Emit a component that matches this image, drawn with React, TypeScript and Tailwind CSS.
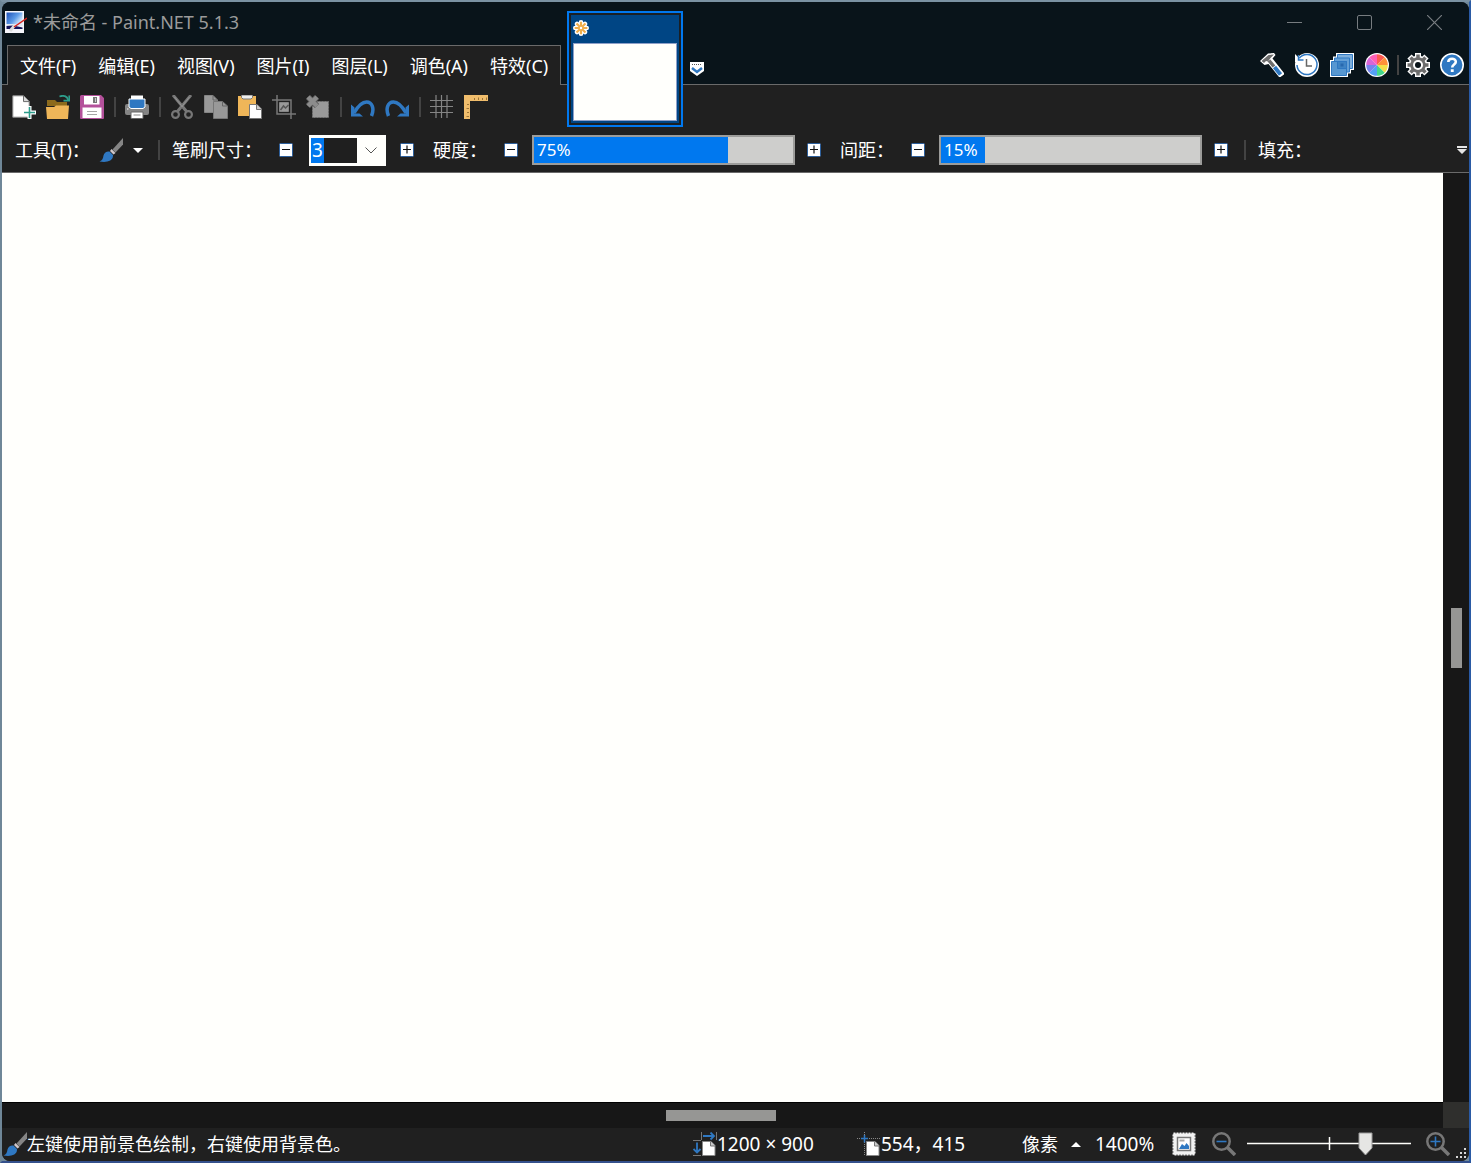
import { useState } from 'react';
import type { ReactNode } from 'react';

const menus = ['文件(F)', '编辑(E)', '视图(V)', '图片(I)', '图层(L)', '调色(A)', '特效(C)'];

function Icon({ children, className = 'size-6' }: { children: ReactNode; className?: string }) {
  return (
    <svg viewBox="0 0 24 24" fill="none" className={`shrink-0 ${className}`} aria-hidden="true">
      {children}
    </svg>
  );
}

const NewIcon = () => (
  <Icon>
    <path d="M.8.8h10.7l5.7 5.7v15.7H.8z" fill="#fff" stroke="#8a8a8a" />
    <path d="M11.5 1v5.6H17" fill="#d8d8d8" stroke="#6d6d6d" />
    <path d="M17.500 11v13M11 17.500h13" stroke="#fff" strokeWidth="4" />
    <path d="M17.500 12v11M12 17.500h11" stroke="#2d9d8b" strokeWidth="1.600" />
  </Icon>
);

const OpenIcon = () => (
  <Icon>
    <path d="M1 11V5h8l2 2h10v4z" fill="#8c6a1c" />
    <path d="M0 12h8l2-1.500h13L22 24H1z" fill="#efb659" />
    <path d="M13.500 1.500c4-1.500 7.500-.5 8.800 3.500" stroke="#2d9d8b" strokeWidth="1.800" />
    <path d="M23.300.5v5.200H17.500" stroke="#2d9d8b" strokeWidth="1.800" />
  </Icon>
);

const SaveIcon = () => (
  <Icon>
    <path d="M0 1.500A1.500 1.500 0 0 1 1.500 0H21l3 3v20a1 1 0 0 1-1 1H1a1 1 0 0 1-1-1z" fill="#b4519b" />
    <path d="M4 1h15.500v8.500H4zM2.500 12.500h19V23h-19z" fill="#fff" />
    <path d="M13 2h4v6h-4z" fill="#777" />
    <path d="M15 3h1v4h-1z" fill="#ccc" />
    <path d="M7 16.500h10M7 19.500h10" stroke="#a5a5a5" />
  </Icon>
);

const PrintIcon = () => (
  <Icon>
    <rect x="0" y="9" width="24" height="11" rx="2" fill="#858585" />
    <path d="M6 .5h12V7H6z" fill="#fff" />
    <path d="M4 4h16v8l-2 1.500H6L4 12z" fill="#2f78c2" stroke="#fff" />
    <path d="M6 17h12v6.500H6z" fill="#fff" stroke="#666" />
    <path d="M8.500 20h7" stroke="#888" />
    <path d="M2 14h1.500" stroke="#fff" />
  </Icon>
);

const CutIcon = () => (
  <Icon>
    <path d="M3 0 17 17M21 0 7 17" stroke="#777" strokeWidth="3" />
    <path d="m4.500 2 8 10M19.500 2l-8 10" stroke="#999" strokeWidth="0.800" />
    <circle cx="5.500" cy="19.500" r="3.400" stroke="#777" strokeWidth="2.200" />
    <circle cx="18.500" cy="19.500" r="3.400" stroke="#777" strokeWidth="2.200" />
  </Icon>
);

const CopyIcon = () => (
  <Icon>
    <path d="M.5.5H9l4.500 4.500v12.500H.5z" fill="#999" stroke="#858585" />
    <path d="M9 .5V5h4.500" stroke="#666" />
    <path d="M9.500 6.500h9L23.500 11v12.500h-14z" fill="#999" stroke="#777" />
    <path d="M18.500 6.500V11h5" stroke="#666" />
  </Icon>
);

const PasteIcon = () => (
  <Icon>
    <path d="M0 1h18v20H0z" fill="#efb659" />
    <path d="M3.500 0h11v2.500L13 4H5L3.500 2.500z" fill="#eee" stroke="#777" />
    <path d="M11.500 9.500H19l4.500 4.500v9.500h-12z" fill="#fff" stroke="#777" />
    <path d="M18.500 9.500V14.500h5" fill="#ccc" stroke="#777" />
  </Icon>
);

const CropIcon = () => (
  <Icon>
    <path d="M0 5h19v19M5 0v19h19" stroke="#777" strokeWidth="1.500" />
    <path d="M7.500 7.500h9v9h-9z" fill="#999" stroke="#858585" />
    <path d="m8.500 15 3-4 2 2 3-3" stroke="#555" strokeWidth="1.500" />
  </Icon>
);

const DeselectIcon = () => (
  <Icon>
    <path d="M6.500 6.500h16v16h-16z" fill="#999" stroke="#777" strokeDasharray="2 1" />
    <path d="m2 2 9 9M11 2l-9 9" stroke="#555" strokeWidth="6" />
    <path d="m2 2 9 9M11 2l-9 9" stroke="#8c8c8c" strokeWidth="4.500" />
  </Icon>
);

const UndoIcon = ({ flip = false }: { flip?: boolean }) => (
  <Icon className={flip ? 'size-6 -scale-x-100' : 'size-6'}>
    <path d="M3 18C7 11 11 7 15.500 7c6 0 8 7 5 14" stroke="#2f78c2" strokeWidth="3.500" />
    <path d="M0 9.500v12h12l-3.500-3H3.500v-6z" fill="#2f78c2" />
  </Icon>
);

const GridIcon = () => (
  <Icon>
    <path d="M6 0v23M11.500 0v23M17 0v23M0 5.500h23M0 11.500h23M0 17.500h23" stroke="#858585" strokeWidth="1.200" />
  </Icon>
);

const RulerIcon = () => (
  <Icon>
    <path d="M0 0h24v6H6v18H0z" fill="#f0bd6c" />
    <path d="M10.500 5V3M14.500 5V2.500M18.500 5V3M22.500 5V2.500M5 9.500H3M5 13.500H2.500M5 17.500H3M5 21.500H2.500" stroke="#9b7436" />
  </Icon>
);

const BrushIcon = () => (
  <Icon>
    <path d="M24 0v6.500l-7.500 8-3-3z" fill="#858585" />
    <path d="m12.500 11 4 4-2 1.500-3.500-3.500z" fill="#d0c8cc" />
    <path d="M10.500 13.500 14 17c.5 7-7.500 7.500-13.500 6.500 3-1 3.500-3 4-6 1-3.500 3.500-4.500 6-4z" fill="#2f78c2" />
  </Icon>
);

const HammerIcon = () => (
  <Icon>
    <path d="M0 8 8 .500 14 0l1.500 2L12.500 5.500 24 20v1.500L20.500 24h-1.500L8.500 11 4.500 12z" fill="#fff" />
    <path d="M1.500 8 8.500 2 14 1.500 10.500 5l-2.500 3.500-2-.5L4 10z" fill="#6d6d6d" />
    <path d="m9 7.500 5 6" stroke="#6d6d6d" strokeWidth="3.500" />
    <path d="m14.500 14 6 7.500" stroke="#2f78c2" strokeWidth="4" />
  </Icon>
);

const HistoryIcon = () => (
  <Icon>
    <circle cx="12" cy="12" r="12" fill="#fff" />
    <path d="M4 5.500A10 10 0 1 1 2 12" stroke="#2f78c2" strokeWidth="1.500" />
    <path d="M0 1v8h8z" fill="#fff" />
    <path d="M3.500 2v5h5" stroke="#2f78c2" strokeWidth="1.500" />
    <path d="M11.500 6v7H17" stroke="#666" strokeWidth="1.500" />
  </Icon>
);

const LayersIcon = () => (
  <Icon>
    <path d="M0 7h3V3.500h3V0h18v17h-3v3.500h-3V24H0z" fill="#fff" />
    <path d="M7.500 1.500h15v14h-15z" fill="#7eafdc" stroke="#2f78c2" />
    <path d="M4.500 5h15v14h-15z" fill="#65a0d6" stroke="#2f78c2" />
    <path d="M1.500 8.500h15v14h-15z" fill="#5797d1" stroke="#2f78c2" />
    <path d="M7.500 8.500h9v7h-9z" fill="#3e83c4" stroke="#2f78c2" />
    <path d="M10.500 10.500h3v3h-3z" fill="#2768ae" />
  </Icon>
);

const wheel = ['#ff5a50', '#ff9138', '#f4df4a', '#44d98a', '#55a0f5', '#7583ee', '#d865d8', '#ff5fb5'];

const ColorsIcon = () => (
  <Icon>
    <circle cx="12" cy="12" r="12" fill="#fff" />
    {wheel.map((color, i) => (
      <path key={color} d="M12 12V1.200a10.800 10.800 0 0 1 7.640 3.160z" fill={color} transform={`rotate(${i * 45} 12 12)`} />
    ))}
  </Icon>
);

const GearIcon = () => (
  <Icon>
    <path d="M12 0v24M0 12h24M3.500 3.500l17 17M20.500 3.500l-17 17" stroke="#fff" strokeWidth="6" />
    <circle cx="12" cy="12" r="9.500" fill="#fff" />
    <path d="M12 1.500v21M1.500 12h21M4.500 4.500l15 15M19.500 4.500l-15 15" stroke="#6d6d6d" strokeWidth="3.500" />
    <circle cx="12" cy="12" r="7.800" fill="#6d6d6d" />
    <circle cx="12" cy="12" r="5" fill="#fff" />
    <circle cx="12" cy="12" r="3" fill="#09141a" />
  </Icon>
);

const HelpIcon = () => (
  <Icon>
    <circle cx="12" cy="12" r="11.200" fill="#2f78c2" stroke="#fff" strokeWidth="1.600" />
    <path d="M8.300 9c.2-4.200 7.500-4.200 7.500-.2 0 2.700-3.600 2.700-3.600 5.700" stroke="#fff" strokeWidth="2.600" />
    <path d="M10.800 16.200h2.900V19h-2.900z" fill="#fff" />
  </Icon>
);

const petals = [0, 45, 90, 135, 180, 225, 270, 315];

const FlowerIcon = () => (
  <Icon className="size-4">
    <circle cx="12" cy="12" r="9" fill="#fff" />
    {petals.map((a) => (
      <circle key={a} cx="12" cy="3.500" r="3.500" fill="#fff" transform={`rotate(${a} 12 12)`} />
    ))}
    {petals.map((a) => (
      <path key={a} d="M12 9V2.500" stroke="#f0ae4c" strokeWidth="3.200" transform={`rotate(${a} 12 12)`} />
    ))}
    <circle cx="12" cy="12" r="2.800" fill="#fff" stroke="#f0ae4c" strokeWidth="2" />
  </Icon>
);

const LogoIcon = () => (
  <svg viewBox="0 0 22 24" className="h-6 w-[22px] shrink-0" aria-hidden="true">
    <defs>
      <linearGradient id="sky" x1="0" y1="0" x2="1" y2="0.6">
        <stop offset="0" stopColor="#1d50b8" />
        <stop offset="0.6" stopColor="#5b9ae6" />
        <stop offset="1" stopColor="#d5e8fb" />
      </linearGradient>
    </defs>
    <path d="M0 1h19v22H0z" fill="#f5f5fa" />
    <path d="M1.500 2.500h16V14h-16z" fill="url(#sky)" />
    <path d="M1.500 14h16v2l-5 1h-11z" fill="#dfe8f5" />
    <path d="M1.500 16 8 15.500l9.500 2V19h-16z" fill="#14145a" />
    <path d="m5 21 5-6" stroke="#ddd" strokeWidth="3" />
    <path d="m9 17 13-9" stroke="#d8231c" strokeWidth="1.500" />
  </svg>
);

const SizeIcon = () => (
  <Icon>
    <path d="M8.500 0v8M23.500 0v8M0 8.500h8M0 23.500h8" stroke="#777" />
    <path d="M10 4h11M17.500 0.500 21 4l-3.500 3.500M4 10.500v10M.5 17 4 20.500 7.500 17" stroke="#2f78c2" strokeWidth="1.800" />
    <path d="M9.500 9.500H18l4 4v10H9.500z" fill="#fff" stroke="#888" />
    <path d="M17.500 9.500V14H22" fill="#ccc" stroke="#777" />
  </Icon>
);

const CursorIcon = () => (
  <Icon>
    <path d="M7.500 0v24M0 6.500h24" stroke="#888" strokeDasharray="1 1" />
    <path d="M7.500 3v7.500M4 6.500h7" stroke="#2f78c2" strokeWidth="1.500" />
    <path d="M9.500 9.500H18l4 4v10H9.500z" fill="#fff" stroke="#888" />
    <path d="M17.500 9.500V14H22" fill="#ccc" stroke="#777" />
  </Icon>
);

const FitIcon = () => (
  <Icon>
    <path d="M1.500 1.500h21v21h-21z" fill="#f2f2f2" stroke="#f2f2f2" strokeWidth="2" strokeDasharray="2 1" />
    <path d="M5.500 5.500h13v13h-13z" fill="#fff" stroke="#777" strokeWidth="1.500" />
    <path d="m7 17 3-5 2.500 2 2-3 2.500 3v3z" fill="#2f78c2" />
    <path d="M7.500 8.500h5" stroke="#aaa" strokeWidth="2" />
  </Icon>
);

const MagnifyIcon = ({ plus = false }: { plus?: boolean }) => (
  <Icon>
    <circle cx="9.500" cy="9.500" r="8.200" stroke="#777" strokeWidth="2.500" />
    <path d="m15 15 8 8" stroke="#777" strokeWidth="3.500" />
    <path d={plus ? 'M4.500 9.500h10M9.500 4.500v10' : 'M4.500 9.500h10'} stroke="#2f78c2" strokeWidth="1.600" />
  </Icon>
);

function Separator({ className = 'ml-[5px] mr-1' }: { className?: string }) {
  return <span className={`h-5 w-[2px] shrink-0 bg-[#434343] ${className}`} />;
}

function ToolButton({ label, disabled, children }: { label: string; disabled?: boolean; children: ReactNode }) {
  return (
    <button type="button" aria-label={label} disabled={disabled} className="shrink-0 px-[5px]">
      {children}
    </button>
  );
}

function StepButton({ label, plus = false }: { label: string; plus?: boolean }) {
  return (
    <button type="button" aria-label={label} className="shrink-0">
      <svg viewBox="0 0 14 14" className="size-[14px]" aria-hidden="true">
        <rect x="0.5" y="0.5" width="13" height="13" rx="1" fill="#fff" stroke="#2c5f9c" />
        <path d={plus ? 'M3 6.500h8M7 2.500v8' : 'M3 6.500h8'} stroke="#111" strokeWidth="1.200" />
      </svg>
    </button>
  );
}

function PercentBar({ label, initial }: { label: string; initial: number }) {
  const [value, setValue] = useState(initial);

  return (
    <div className="relative h-[30px] w-[263px] shrink-0 border-2 border-[#9c9c9a] bg-[#cececc]">
      {/* The fill never gets narrower than its own text */}
      <div
        className="flex h-full min-w-fit items-center bg-[#0078ef] pl-[3px] pr-[7px] text-[17px] text-white"
        style={{ width: `${value}%` }}
      >
        {value}%
      </div>
      <input
        type="range"
        aria-label={label}
        value={value}
        onChange={(e) => setValue(Number(e.target.value))}
        className="absolute inset-0 size-full opacity-0"
      />
    </div>
  );
}

function TitleBar() {
  return (
    <div className="flex h-[43px] items-start bg-[#09141a]">
      <div className="flex h-10 flex-1 items-center gap-[6px] pl-[3px]">
        <LogoIcon />
        <h1 className="text-lg text-[#9b9b9b]">*未命名 - Paint.NET 5.1.3</h1>
      </div>
      <div className="flex h-10 text-[#777c80]">
        <button type="button" aria-label="最小化" className="flex w-[70px] items-center justify-center">
          <span className="h-px w-[15px] bg-current" />
        </button>
        <button type="button" aria-label="最大化" className="flex w-[70px] items-center justify-center">
          <span className="size-[15px] rounded-[2px] border border-current" />
        </button>
        <button type="button" aria-label="关闭" className="flex w-[70px] items-center justify-center">
          <svg viewBox="0 0 15 15" className="size-[15px]" stroke="currentColor" strokeWidth="1.200" aria-hidden="true">
            <path d="m0 0 15 15M15 0 0 15" />
          </svg>
        </button>
      </div>
    </div>
  );
}

function MenuRow() {
  return (
    <div className="flex h-10 bg-[#09141a]">
      <div className="w-[5px] border-b border-[#6a6a6a]" />
      <nav className="flex shrink-0 items-center gap-[22px] border-x border-t border-[#6a6a6a] bg-[#202020] px-3">
        {menus.map((name) => (
          <button key={name} type="button" className="whitespace-nowrap">
            {name}
          </button>
        ))}
      </nav>
      <div className="flex flex-1 items-center justify-end border-b border-[#6a6a6a] pr-[5px]">
        <div className="flex items-center gap-[11px]">
          <button type="button" aria-label="工具窗口">
            <HammerIcon />
          </button>
          <button type="button" aria-label="历史记录">
            <HistoryIcon />
          </button>
          <button type="button" aria-label="图层窗口">
            <LayersIcon />
          </button>
          <button type="button" aria-label="颜色窗口">
            <ColorsIcon />
          </button>
        </div>
        <Separator className="ml-2 mr-[7px]" />
        <div className="flex items-center gap-[10px]">
          <button type="button" aria-label="设置">
            <GearIcon />
          </button>
          <button type="button" aria-label="帮助">
            <HelpIcon />
          </button>
        </div>
      </div>
    </div>
  );
}

function ToolBar() {
  return (
    <div className="flex h-11 items-center pl-[5px]">
      <ToolButton label="新建"><NewIcon /></ToolButton>
      <ToolButton label="打开"><OpenIcon /></ToolButton>
      <ToolButton label="保存"><SaveIcon /></ToolButton>
      <Separator />
      <ToolButton label="打印"><PrintIcon /></ToolButton>
      <Separator />
      <ToolButton label="剪切" disabled><CutIcon /></ToolButton>
      <ToolButton label="复制" disabled><CopyIcon /></ToolButton>
      <ToolButton label="粘贴"><PasteIcon /></ToolButton>
      <ToolButton label="裁剪" disabled><CropIcon /></ToolButton>
      <ToolButton label="取消选择" disabled><DeselectIcon /></ToolButton>
      <Separator />
      <ToolButton label="撤销"><UndoIcon /></ToolButton>
      <ToolButton label="重做"><UndoIcon flip /></ToolButton>
      <Separator />
      <ToolButton label="网格"><GridIcon /></ToolButton>
      <ToolButton label="标尺"><RulerIcon /></ToolButton>
    </div>
  );
}

function ToolOptions() {
  return (
    <div className="flex h-11 items-center whitespace-nowrap border-b border-[#6a6a6a] pb-px pl-[13px]">
      <span className="w-[84px] shrink-0">工具(T)：</span>
      <button type="button" aria-label="画笔" className="flex shrink-0 items-center gap-[10px]">
        <BrushIcon />
        <svg viewBox="0 0 10 5" className="h-[5px] w-[10px]" fill="#fff" aria-hidden="true">
          <path d="M0 0h10L5 5z" />
        </svg>
      </button>
      <Separator className="ml-[15px] mr-3" />
      <label htmlFor="brush-size" className="w-[107px] shrink-0">笔刷尺寸：</label>
      <StepButton label="减小尺寸" />
      <div className="ml-4 mr-[14px] flex h-[31px] w-[77px] shrink-0 border-2 border-[#fffffc] bg-[#fffffc]">
        <input
          id="brush-size"
          defaultValue="3"
          className="my-px w-[46px] bg-[linear-gradient(90deg,#0078ef_13px,#1f1f1f_13px)] pl-px text-[19px] text-white outline-none"
        />
        <button type="button" aria-label="选择尺寸" className="flex flex-1 items-center justify-center">
          <svg viewBox="0 0 12 7" className="h-[7px] w-3" fill="none" stroke="#555" aria-hidden="true">
            <path d="m.5.500 5.500 5.500L11.500.5" />
          </svg>
        </button>
      </div>
      <StepButton label="增大尺寸" plus />
      <span className="ml-[19px] w-[71px] shrink-0">硬度：</span>
      <StepButton label="减小硬度" />
      <div className="ml-[14px] mr-3">
        <PercentBar label="硬度" initial={75} />
      </div>
      <StepButton label="增大硬度" plus />
      <span className="ml-[19px] w-[71px] shrink-0">间距：</span>
      <StepButton label="减小间距" />
      <div className="ml-[14px] mr-3">
        <PercentBar label="间距" initial={15} />
      </div>
      <StepButton label="增大间距" plus />
      <Separator className="ml-4 mr-3" />
      <span>填充：</span>
      <button type="button" aria-label="更多选项" className="ml-auto mr-[2px]">
        <svg viewBox="0 0 10 8" className="h-2 w-[10px]" fill="#e5e5e5" aria-hidden="true">
          <path d="M0 0h10v2H0zM0 3h10L5 8z" />
        </svg>
      </button>
    </div>
  );
}

function StatusBar() {
  const [zoom, setZoom] = useState(72);

  return (
    <footer className="flex h-[33px] shrink-0 items-center whitespace-nowrap bg-[#202020] pb-px pl-px">
      <div className="flex flex-1 items-center">
        <BrushIcon />
        <span>左键使用前景色绘制，右键使用背景色。</span>
      </div>
      <div className="flex w-[164px] items-center text-[19px]">
        <SizeIcon />
        1200 × 900
      </div>
      <div className="flex w-[165px] items-center text-[19px]">
        <CursorIcon />
        554，415
      </div>
      <button type="button" className="flex w-[73px] items-center gap-[13px]">
        像素
        <svg viewBox="0 0 10 5" className="h-[5px] w-[10px]" fill="#fff" aria-hidden="true">
          <path d="M0 5h10L5 0z" />
        </svg>
      </button>
      <span className="w-[77px] text-[19px]">1400%</span>
      <button type="button" aria-label="适应窗口">
        <FitIcon />
      </button>
      <button type="button" aria-label="缩小" className="ml-4">
        <MagnifyIcon />
      </button>
      <div className="relative mx-[11px] h-6 w-[164px]">
        <svg viewBox="0 0 164 24" className="h-6 w-[164px]" aria-hidden="true">
          <path d="M0 11.500h164M82.500 5v13" stroke="#fffffc" strokeWidth="1.500" />
          <path d="M112 1h13v15l-6.500 7-6.500-7z" fill="#e6e6e4" stroke="#999" />
        </svg>
        <input
          type="range"
          aria-label="缩放"
          value={zoom}
          onChange={(e) => setZoom(Number(e.target.value))}
          className="absolute inset-0 size-full opacity-0"
        />
      </div>
      <button type="button" aria-label="放大" className="ml-1">
        <MagnifyIcon plus />
      </button>
      <svg viewBox="0 0 12 12" className="ml-[6px] mr-px size-3 self-end" fill="#d8d8d8" aria-hidden="true">
        <path d="M8 0h2v2H8zM4 4h2v2H4zM8 4h2v2H8zM0 8h2v2H0zM4 8h2v2H4zM8 8h2v2H8z" />
      </svg>
    </footer>
  );
}

export default function App() {
  return (
    <div className="flex h-screen flex-col border-2 border-b-[#34508c] border-l-[#6f8798] border-r-[#2a5aa4] border-t-[#7b92a3] bg-[#6f8798]">
      <div className="relative flex flex-1 flex-col overflow-hidden rounded-lg bg-[#202020] font-['Noto_Sans','Noto_Sans_CJK_SC',sans-serif] text-lg leading-6 text-white">
        <header className="shrink-0">
          <TitleBar />
          <MenuRow />
          <ToolBar />
          <ToolOptions />
        </header>

        {/* Open image tab, hangs over the title bar and the menus */}
        <div className="absolute left-[565px] top-[9px] flex items-center">
          <button type="button" aria-label="未命名" className="size-[116px] border-2 border-[#0078ef] bg-[#1a1f24] p-[2px]">
            <span className="flex size-full flex-col bg-[#004584] p-[2px]">
              <span className="flex h-[26px] items-start pt-[3px]">
                <FlowerIcon />
              </span>
              <span className="flex-1 border border-[#8fa0c8] bg-[#fffffc]" />
            </span>
          </button>
          <button type="button" aria-label="图像列表" className="ml-[7px]">
            <svg viewBox="0 0 14 14" className="size-[14px]" aria-hidden="true">
              <path d="M0 0h14v9l-7 5-7-5z" fill="#fff" />
              <path d="M2 2.500h10" stroke="#555" strokeDasharray="1 1" />
              <path d="m2 6 5 4 5-4" fill="none" stroke="#2f78c2" strokeWidth="2.500" />
            </svg>
          </button>
        </div>

        <div className="flex min-h-0 flex-1">
          <main className="flex-1 bg-[#fffffc]" />
          <div className="flex w-[26px] items-center bg-[#171717] pl-2">
            <div className="h-[60px] w-[11px] bg-[#969694]" />
          </div>
        </div>
        <div className="flex h-[26px] shrink-0">
          <div className="flex flex-1 items-center justify-center border-t border-black bg-[#171717] pr-[3px]">
            <div className="h-[11px] w-[110px] bg-[#969694]" />
          </div>
          <div className="w-[26px] bg-[#2f2f2d]" />
        </div>
        <StatusBar />
      </div>
    </div>
  );
}
